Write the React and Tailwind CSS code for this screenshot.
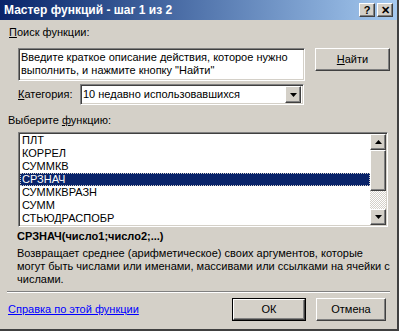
import React from 'react';

const functions = ['ПЛТ', 'КОРРЕЛ', 'СУММКВ', 'СРЗНАЧ', 'СУММКВРАЗН', 'СУММ', 'СТЬЮДРАСПОБР'];

const raised =
  'border border-t-white border-l-white border-b-[#404040] border-r-[#404040] shadow-[inset_-1px_-1px_#808080,inset_1px_1px_#d4d0c8] bg-[#d4d0c8]';
const sunken =
  'border border-t-[#808080] border-l-[#808080] border-b-white border-r-white shadow-[inset_1px_1px_#404040,inset_-1px_-1px_#d4d0c8]';

const Arrow = ({ up }) => (
  <svg width="7" height="4" viewBox="0 0 7 4">
    <path d={up ? 'M3.5 0 L7 4 L0 4 Z' : 'M0 0 L7 0 L3.5 4 Z'} fill="#000" />
  </svg>
);

const App = () => {
  const [selected, setSelected] = React.useState('СРЗНАЧ');

  return (
    <div className="w-[399px] h-[331px] bg-[#d4d0c8] font-['Liberation_Sans',Arial,sans-serif] text-[11px] leading-[13px] text-black border-r-2 border-b-2 border-r-[#404040] border-b-[#404040] overflow-hidden">
      {/* title bar */}
      <div className="h-[20px] flex items-center bg-gradient-to-r from-[#0a246a] to-[#a6caf0] pl-[4px] pr-[4px]">
        <span className="text-white font-bold text-[12px] flex-1">Мастер функций - шаг 1 из 2</span>
        <div className={`${raised} w-[16px] h-[14px] flex items-center justify-center text-[11px] font-bold leading-none`}>?</div>
        <div className={`${raised} w-[16px] h-[14px] ml-[2px] flex items-center justify-center text-[11px] font-bold leading-none`}>✕</div>
      </div>

      <div className="mt-[6px] pl-[9px]">
        <span className="underline">П</span>оиск функции:
      </div>

      <div className="mt-[9px] flex items-start pl-[18px]">
        <div className={`${sunken} bg-white w-[287px] h-[33px] pl-[2px] pt-[2px]`}>
          Введите краткое описание действия, которое нужно
          <br />
          выполнить, и нажмите кнопку "Найти"
        </div>
        <button className={`${raised} ml-[10px] w-[75px] h-[23px] text-[11px]`}>
          <span className="underline">Н</span>айти
        </button>
      </div>

      <div className="mt-[3px] flex items-center pl-[18px]">
        <span className="w-[62px]">
          <span className="underline">К</span>атегория:
        </span>
        <div className={`${sunken} bg-white w-[224px] h-[21px] flex items-center pl-[2px]`}>
          <span className="flex-1">10 недавно использовавшихся</span>
          <div className={`${raised} w-[16px] h-[17px] mr-[2px] flex items-center justify-center`}>
            <Arrow />
          </div>
        </div>
      </div>

      <div className="mt-[9px] pl-[8px]">
        Выберите <span className="underline">ф</span>ункцию:
      </div>

      <div className={`${sunken} bg-white mt-[5px] ml-[18px] w-[370px] h-[95px] flex p-[1px]`}>
        <div className="flex-1 flex flex-col">
          {functions.map((f) => (
            <div
              key={f}
              onClick={() => setSelected(f)}
              className={`h-[13px] pl-[2px] ${
                f === selected ? 'bg-[#0a246a] text-white outline-1 outline-dotted outline-[#d4d0c8] -outline-offset-1' : ''
              }`}
            >
              {f}
            </div>
          ))}
        </div>
        <div className="w-[16px] flex flex-col">
          <div className={`${raised} h-[16px] flex items-center justify-center`}>
            <Arrow up />
          </div>
          <div className={`${raised} h-[41px]`} />
          <div className="flex-1 bg-[repeating-conic-gradient(#ffffff_0_25%,#d4d0c8_0_50%)] bg-[length:2px_2px]" />
          <div className={`${raised} h-[16px] flex items-center justify-center`}>
            <Arrow />
          </div>
        </div>
      </div>

      <div className="mt-[3px] pl-[17px] font-bold">СРЗНАЧ(число1;число2;...)</div>
      <div className="mt-[4px] pl-[17px] whitespace-nowrap">
        Возвращает среднее (арифметическое) своих аргументов, которые
        <br />
        могут быть числами или именами, массивами или ссылками на ячейки с
        <br />
        числами.
      </div>

      <div className="mt-[5px] ml-[7px] w-[383px] border-t border-t-[#808080] border-b border-b-white" />

      <div className="mt-[5px] flex items-center pl-[8px]">
        <a href="#" className="text-[#0000ff] underline flex-1">Справка по этой функции</a>
        <div className="border border-black">
          <button className={`${raised} w-[72px] h-[21px] text-[11px]`}>ОК</button>
        </div>
        <button className={`${raised} ml-[10px] mr-[11px] w-[70px] h-[23px] text-[11px]`}>Отмена</button>
      </div>
    </div>
  );
};

export default App;
